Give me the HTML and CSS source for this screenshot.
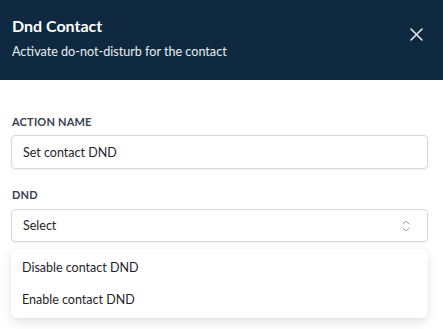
FILE: index.html
```html
<!DOCTYPE html>
<html>
<head>
<meta charset="utf-8">
<link rel="stylesheet" href="styles.css">
</head>
<body>
<div class="panel">
  <header class="head">
    <div class="head-text">
      <h1 class="title">Dnd Contact</h1>
      <p class="subtitle">Activate do-not-disturb for the contact</p>
    </div>
    <button class="close" aria-label="Close">
      <svg width="13" height="13" viewBox="0 0 13 13"><path d="M1 1L12 12M12 1L1 12" stroke="#e6ebf0" stroke-width="1.6" stroke-linecap="round"/></svg>
    </button>
  </header>
  <main class="body">
    <div class="field">
      <label class="label">ACTION NAME</label>
      <div class="input">Set contact DND</div>
    </div>
    <div class="field select-field">
      <label class="label">DND</label>
      <div class="input select">
        <span>Select</span>
        <svg class="arrows" width="8" height="14" viewBox="0 0 8 14"><path d="M1 5L4 2L7 5M1 9L4 12L7 9" fill="none" stroke="#9aa1ab" stroke-width="1" stroke-linecap="round" stroke-linejoin="round"/></svg>
      </div>
      <ul class="menu">
        <li class="opt">Disable contact DND</li>
        <li class="opt">Enable contact DND</li>
      </ul>
    </div>
  </main>
</div>
</body>
</html>
```
FILE: styles.css
```css
* { box-sizing: border-box; }
html, body { margin: 0; padding: 0; background: #ffffff; }
body { font-family: Lato, "Noto Sans", sans-serif; color: #1f2937; }
.panel { width: 443px; height: 329px; overflow: hidden; }
.head {
  height: 80px;
  background: #0f2a40;
  display: flex;
  justify-content: space-between;
  align-items: flex-start;
  padding: 16px 12px 0 12px;
}
.title { margin: 0; font-size: 16px; line-height: 20px; font-weight: 700; color: #ffffff; }
.subtitle { margin: 7px 0 0 0; font-size: 12.6px; line-height: 18px; color: #e8edf2; }
.close { background: none; border: 0; padding: 0; margin: 12px 8px 0 0; width: 13px; height: 13px; display: flex; }
.body { padding: 34px 15px 0 11px; }
.field { display: flex; flex-direction: column; }
.field + .field { margin-top: 18px; }
.label { font-size: 11px; line-height: 16px; font-weight: 700; color: #374151; letter-spacing: 0.2px; margin-left: 1px; }
.input {
  margin-top: 5px;
  height: 34px;
  border: 1px solid #d5d9de;
  border-radius: 4px;
  box-shadow: 0 1px 2px rgba(0,0,0,0.06);
  padding: 0 11px;
  display: flex;
  align-items: center;
  font-size: 12.5px;
  color: #1f2328;
}
.select { height: 33px; margin-top: 6px; justify-content: space-between; }
.arrows { margin-right: 6px; }
.select-field { position: relative; }
.menu {
  position: absolute;
  left: 0; right: 0;
  top: 62px;
  margin: 0;
  list-style: none;
  padding: 2px 0 3px 0;
  background: #ffffff;
  border-radius: 6px;
  box-shadow: 0 4px 12px rgba(0,0,0,0.10), 0 1px 3px rgba(0,0,0,0.05);
}
.opt { height: 32px; display: flex; align-items: center; padding: 0 11px; font-size: 12.5px; color: #1f2328; }
```
